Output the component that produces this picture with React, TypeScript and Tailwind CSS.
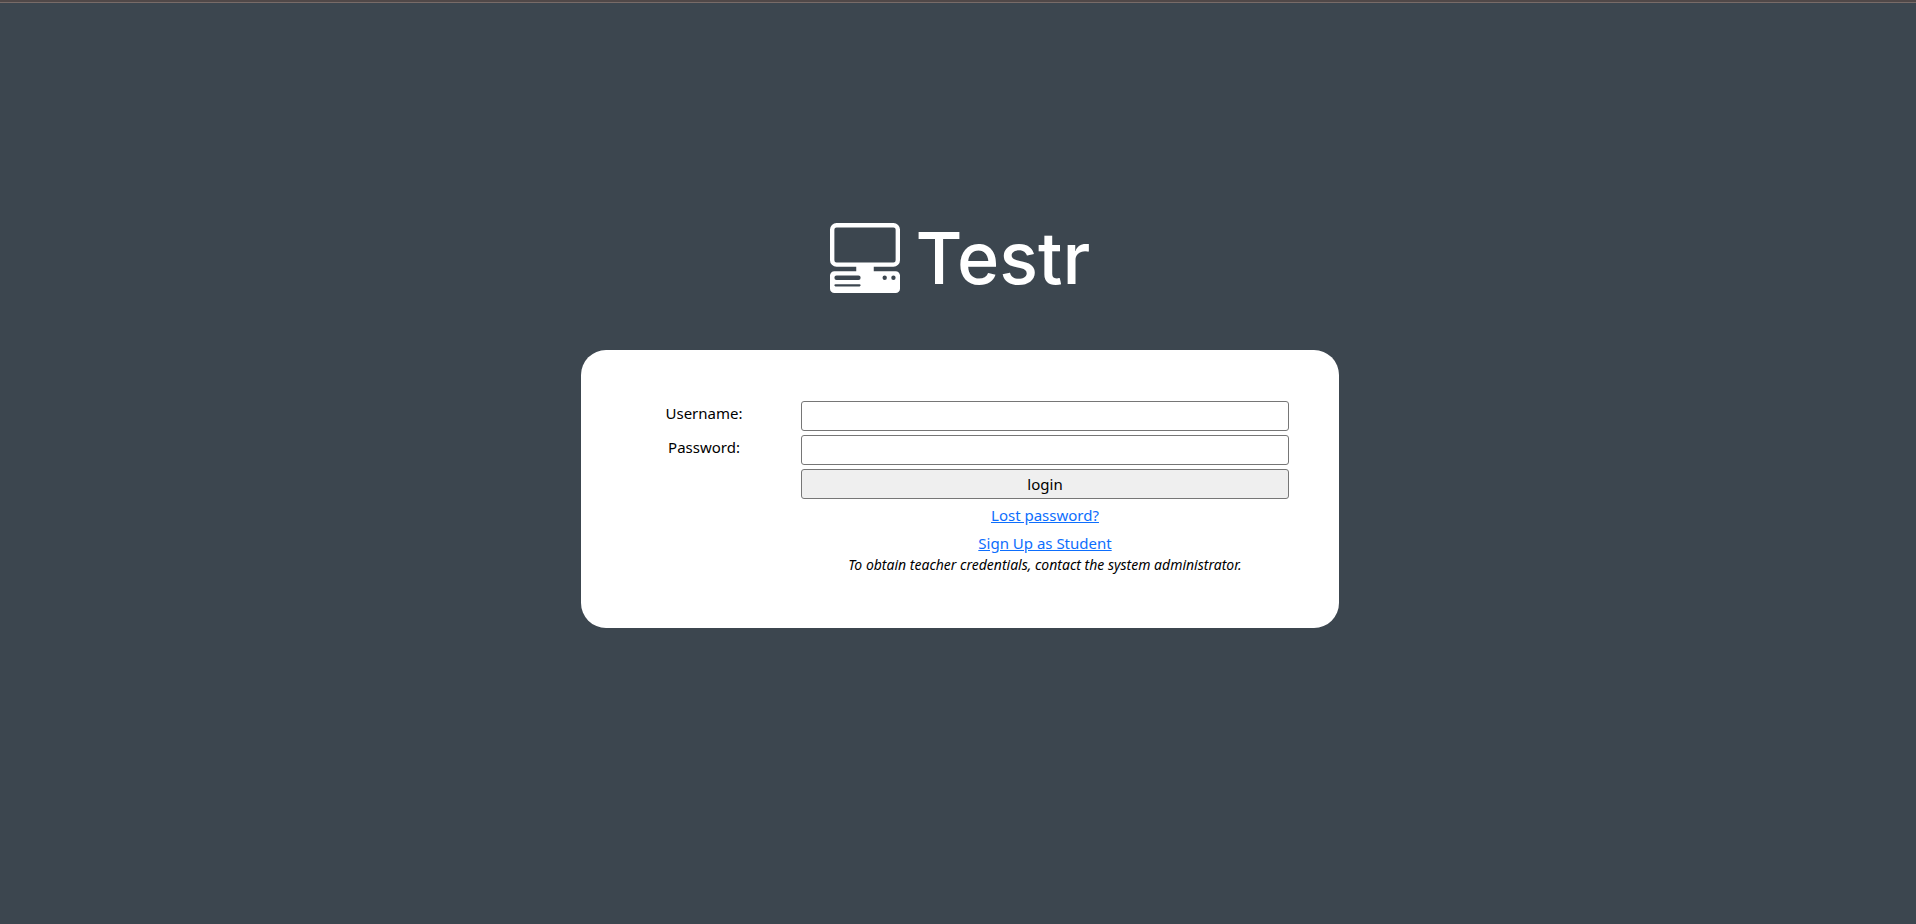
import { BsPcDisplayHorizontal } from "react-icons/bs";

const field =
  "h-[30px] w-full rounded-[3px] border border-[#767676] bg-white px-2 text-base text-black";

export default function App() {
  return (
    <div className="min-h-screen bg-[#3c464f] font-['Noto_Sans',sans-serif] text-[15px] leading-6 text-black">
      <div className="h-[3px] border-b border-[#786b68] bg-[#504848]" />
      <main className="flex flex-col items-center pt-[220px] pl-1">
        <h1 className="flex h-[70px] items-center gap-4 text-white">
          <BsPcDisplayHorizontal className="size-[70px]" aria-hidden="true" />
          <span className="font-['Inter',sans-serif] text-[72px] leading-[70px] font-medium">Testr</span>
        </h1>
        <form
          className="mt-[57px] grid w-full max-w-[758px] grid-cols-[146px_1fr] gap-x-6 gap-y-1 rounded-[25px] bg-white px-[50px] pt-[51px] pb-[53px] text-center"
          onSubmit={(e) => e.preventDefault()}
        >
          <label htmlFor="username">Username:</label>
          <input id="username" name="username" type="text" className={field} />
          <label htmlFor="password">Password:</label>
          <input id="password" name="password" type="password" className={field} />
          <button
            type="submit"
            className="col-start-2 h-[30px] rounded-[3px] border border-[#767676] bg-[#efefef] leading-7"
          >
            login
          </button>
          <div className="col-start-2 flex flex-col items-center gap-1">
            <a href="#lost-password" className="text-[#0d6efd] underline">
              Lost password?
            </a>
            <a href="#sign-up" className="text-[#0d6efd] underline">
              Sign Up as Student
            </a>
            <p className="-mt-1 text-sm italic">
              To obtain teacher credentials, contact the system administrator.
            </p>
          </div>
        </form>
      </main>
    </div>
  );
}
